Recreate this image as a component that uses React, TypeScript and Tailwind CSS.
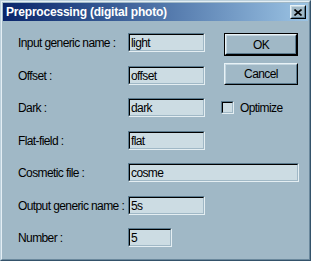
const bg = "bg-[#a0b8c6]"
const txt = "text-[12px] tracking-[-0.6px] text-black"

function Field({ value, w }: { value: string; w: string }) {
  return (
    <div className={`${w} h-[19px] border border-t-[#5a7a8e] border-l-[#5a7a8e] border-b-[#e4eef2] border-r-[#e4eef2]`}>
      <div className={`h-full border border-t-black border-l-black border-b-[#a0b8c6] border-r-[#a0b8c6] bg-[#ccdce3] pl-[1px] leading-[16px] ${txt}`}>
        {value}
      </div>
    </div>
  )
}

function Row({
  label,
  value,
  w = "w-[77px]",
  mt,
  children,
}: {
  label: string
  value: string
  w?: string
  mt: string
  children?: React.ReactNode
}) {
  return (
    <div className={`${mt} flex h-[19px] items-center`}>
      <div className={`w-[110px] shrink-0 whitespace-nowrap ${txt}`}>{label}</div>
      <Field value={value} w={w} />
      {children}
    </div>
  )
}

function Button({ label, def }: { label: string; def?: boolean }) {
  const inner = (
    <div className="h-full border border-t-[#e8f2f6] border-l-[#e8f2f6] border-b-black border-r-black">
      <div className={`flex h-full items-center justify-center border border-t-[#c4d6e0] border-l-[#c4d6e0] border-b-[#5a7a8e] border-r-[#5a7a8e] ${txt}`}>
        {label}
      </div>
    </div>
  )
  return def ? (
    <div className="h-[23px] w-[74px] border border-black">{inner}</div>
  ) : (
    <div className="h-[22px] w-[74px]">{inner}</div>
  )
}

export default function App() {
  return (
    <div
      className={`h-[261px] w-[311px] border border-t-[#bcd0dc] border-l-[#bcd0dc] border-b-[#34526a] border-r-[#34526a] ${bg}`}
      style={{ fontFamily: '"Liberation Sans", Arial, sans-serif' }}
    >
      <div className="h-full border border-t-[#e4eef4] border-l-[#e4eef4] border-b-[#6a889c] border-r-[#6a889c] p-[1px]">
        {/* title bar */}
        <div className="flex h-[18px] items-center justify-between bg-gradient-to-r from-[#0a246a] to-[#9cc4e4] pl-[3px] pr-[2px]">
          <span className="text-[12px] font-bold tracking-[-0.2px] text-white">Preprocessing (digital photo)</span>
          <div className="h-[14px] w-[16px] border border-t-[#e8f2f6] border-l-[#e8f2f6] border-b-black border-r-black">
            <div className="flex h-full items-center justify-center border border-t-[#c4d6e0] border-l-[#c4d6e0] border-b-[#5a7a8e] border-r-[#5a7a8e] bg-[#a0b8c6]">
              <svg width="8" height="7" viewBox="0 0 8 7">
                <path d="M0.5 0.5 L7.5 6.5 M7.5 0.5 L0.5 6.5" stroke="black" strokeWidth="1.6" />
              </svg>
            </div>
          </div>
        </div>

        {/* body */}
        <div className="pl-[15px]">
          <Row label="Input generic name :" value="light" mt="mt-[12px]">
            <div className="ml-[19px] self-start">
              <Button label="OK" def />
            </div>
          </Row>
          <Row label="Offset :" value="offset" mt="mt-[14px]">
            <div className="ml-[19px] self-end">
              <Button label="Cancel" />
            </div>
          </Row>
          <Row label="Dark :" value="dark" mt="mt-[13px]">
            <div className="ml-[16px] flex items-center gap-[6px]">
              <div className="h-[13px] w-[13px] border border-t-[#5a7a8e] border-l-[#5a7a8e] border-b-[#e4eef2] border-r-[#e4eef2]">
                <div className="h-full border border-t-black border-l-black border-b-[#a0b8c6] border-r-[#a0b8c6] bg-[#ccdce3]" />
              </div>
              <span className={txt}>Optimize</span>
            </div>
          </Row>
          <Row label="Flat-field :" value="flat" mt="mt-[14px]" />
          <Row label="Cosmetic file :" value="cosme" w="w-[171px]" mt="mt-[13px]" />
          <Row label="Output generic name :" value="5s" mt="mt-[14px]" />
          <Row label="Number :" value="5" w="w-[44px]" mt="mt-[13px]" />
        </div>
      </div>
    </div>
  )
}
